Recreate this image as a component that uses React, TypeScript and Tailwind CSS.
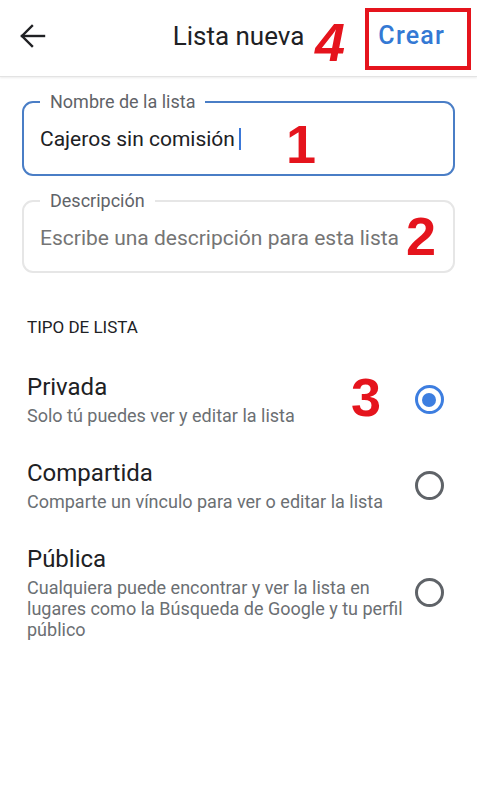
import React from 'react';

const OPTIONS = [
  { id: 'privada', title: 'Privada', desc: 'Solo tú puedes ver y editar la lista' },
  { id: 'compartida', title: 'Compartida', desc: 'Comparte un vínculo para ver o editar la lista' },
  {
    id: 'publica',
    title: 'Pública',
    desc: 'Cualquiera puede encontrar y ver la lista en lugares como la Búsqueda de Google y tu perfil público',
  },
];

function Mark({ n, className }: { n: string; className: string }) {
  return (
    <span
      className={`absolute font-['Liberation_Sans',Arial,sans-serif] font-bold text-[54px] leading-none text-[#e5141d] ${className}`}
    >
      {n}
    </span>
  );
}

export default function App() {
  const selected = 'privada';

  return (
    <div className="relative w-[477px] h-[811px] bg-white font-['Roboto',sans-serif] text-[#202124] overflow-hidden">
      {/* cabecera */}
      <header className="grid grid-cols-[1fr_auto_1fr] items-center h-[77px] pb-[4px] border-b border-[#e3e3e3] shadow-[0_1px_2px_rgba(0,0,0,0.08)]">
        <button className="justify-self-start ml-[19px] w-[28px] h-[28px] flex items-center justify-center">
          <svg width="28" height="26" viewBox="0 0 28 26" fill="none" stroke="#202124" strokeWidth="2.4" strokeLinecap="square">
            <path d="M3 13h22" />
            <path d="M13 3 3 13l10 10" />
          </svg>
        </button>
        <h1 className="text-[26px] leading-[30px] font-normal">Lista nueva</h1>
        <button className="justify-self-end mr-[32px] text-[25px] leading-[30px] font-medium tracking-[1.2px] text-[#3479d4]">
          Crear
        </button>
      </header>

      {/* campos */}
      <fieldset className="mx-[22px] mt-[15px] h-[84px] border-2 border-[#4a7ec6] rounded-[11px] pl-[16px] pr-[16px] pt-[14px]">
        <legend className="px-[10px] text-[18px] leading-[20px] text-[#5f6368]">Nombre de la lista</legend>
        <div className="flex items-center text-[21px] leading-[26px] text-[#202124]">
          <span>Cajeros sin comisión</span>
          <span className="ml-[4px] w-[2px] h-[22px] bg-[#3b78d8]" />
        </div>
      </fieldset>

      <fieldset className="mx-[22px] mt-[15px] h-[82px] border-2 border-[#e6e6e6] rounded-[11px] pl-[16px] pr-[16px] pt-[14px]">
        <legend className="px-[10px] text-[18px] leading-[20px] text-[#5f6368]">Descripción</legend>
        <div className="text-[21px] leading-[26px] text-[#757575]">Escribe una descripción para esta lista</div>
      </fieldset>

      {/* tipo de lista */}
      <h2 className="mt-[44px] ml-[27px] text-[17px] leading-[20px] font-normal text-[#202124]">TIPO DE LISTA</h2>

      <div className="mt-[36px] flex flex-col gap-[33px]">
        {OPTIONS.map((o) => (
          <div key={o.id} className="flex items-center pl-[27px] pr-[33px]">
            <div className="w-[378px] shrink-0">
              <div className="text-[24px] leading-[28px] text-[#202124]">{o.title}</div>
              <div className="mt-[4px] text-[18px] leading-[21px] text-[#6b6f73]">{o.desc}</div>
            </div>
            <div className="ml-auto w-[30px] h-[30px] flex items-center justify-center">
              {o.id === selected ? (
                <span className="w-[29px] h-[29px] rounded-full border-[3px] border-[#3d7ee0] flex items-center justify-center">
                  <span className="w-[14px] h-[14px] rounded-full bg-[#3d7ee0]" />
                </span>
              ) : (
                <span className="w-[29px] h-[29px] rounded-full border-[3px] border-[#5f6368]" />
              )}
            </div>
          </div>
        ))}
      </div>

      {/* anotaciones */}
      <Mark n="4" className="left-[315px] top-[15px] italic" />
      <span className="absolute left-[365px] top-[8px] w-[106px] h-[62px] border-[4px] border-[#e5141d]" />
      <Mark n="1" className="left-[286px] top-[117px]" />
      <Mark n="2" className="left-[406px] top-[209px]" />
      <Mark n="3" className="left-[351px] top-[370px]" />
    </div>
  );
}
